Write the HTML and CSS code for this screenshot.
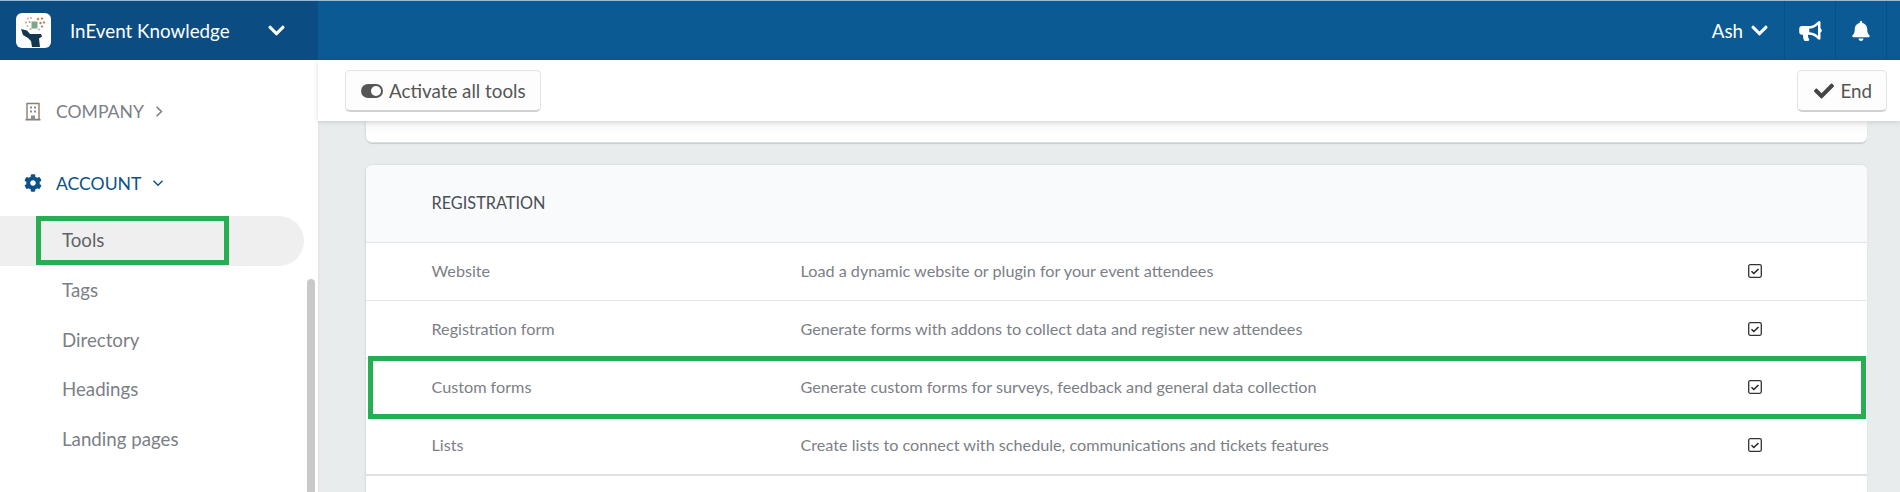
FILE: index.html
```html
<!DOCTYPE html>
<html lang="en">
<head>
<meta charset="utf-8">
<title>InEvent Knowledge - Tools</title>
<link rel="stylesheet" href="styles.css">
</head>
<body>
<header class="topbar">
  <div class="brand">
    <svg class="logo" viewBox="0 0 35 35">
      <rect width="35" height="35" rx="6" fill="#fff"/>
      <g>
        <circle cx="12" cy="5.500" r="1.100" fill="#d9a9a0"/><circle cx="15" cy="5" r="1" fill="#a9b98a"/>
        <circle cx="22" cy="6" r="1.300" fill="#d98a3a"/><circle cx="26" cy="5.500" r="1.100" fill="#c9604b"/>
        <circle cx="10" cy="9.500" r="1.100" fill="#d9a36a"/><circle cx="13.500" cy="9" r="1" fill="#8aa7ae"/>
        <circle cx="24.500" cy="10" r="1.200" fill="#6d98a3"/><circle cx="28" cy="9.500" r="1.200" fill="#d98a3a"/>
        <circle cx="11.500" cy="13" r="1" fill="#a9b98a"/><circle cx="26" cy="13.500" r="1.100" fill="#c9604b"/>
        <circle cx="14.500" cy="16" r="1" fill="#d9a36a"/><circle cx="23" cy="16.500" r="1" fill="#a9b98a"/>
        <rect x="15.500" y="8.500" width="6" height="7" fill="#7fa58c"/>
      </g>
      <path d="M5 16l6 1.500 3 3.500h11l1 2.500-3 2 1 8.500h-8l-1-6-3-3-5-3z" fill="#14384f"/>
    </svg>
    <span class="brand-name">InEvent Knowledge</span>
    <svg class="chev-brand" viewBox="0 0 448 512"><path d="M207.029 381.476L12.686 187.132c-9.373-9.373-9.373-24.569 0-33.941l22.667-22.667c9.357-9.357 24.522-9.375 33.901-.04L224 284.505l154.745-154.021c9.379-9.335 24.544-9.317 33.901.04l22.667 22.667c9.373 9.373 9.373 24.569 0 33.941L240.971 381.476c-9.373 9.372-24.569 9.372-33.942 0z"/></svg>
  </div>
  <div class="top-right">
    <div class="user">Ash
      <svg class="chev-user" viewBox="0 0 448 512"><path d="M207.029 381.476L12.686 187.132c-9.373-9.373-9.373-24.569 0-33.941l22.667-22.667c9.357-9.357 24.522-9.375 33.901-.04L224 284.505l154.745-154.021c9.379-9.335 24.544-9.317 33.901.04l22.667 22.667c9.373 9.373 9.373 24.569 0 33.941L240.971 381.476c-9.373 9.372-24.569 9.372-33.942 0z"/></svg>
    </div>
    <div class="top-icon">
      <svg class="horn" viewBox="0 0 576 512"><path d="M576 240c0-23.63-12.95-44.04-32-55.12V32.01C544 23.26 537.02 0 512 0c-7.12 0-14.19 2.38-19.98 7.02l-85.03 68.03C364.28 109.19 310.66 128 256 128H64c-35.35 0-64 28.65-64 64v96c0 35.35 28.65 64 64 64h33.7c-1.39 10.48-2.18 21.14-2.18 32 0 39.77 9.26 77.35 25.56 110.94 5.19 10.69 16.52 17.06 28.4 17.06h74.28c26.05 0 41.69-29.84 25.9-50.56-16.4-21.52-26.15-48.36-26.15-77.44 0-11.11 1.62-21.79 4.41-32H256c54.66 0 108.28 18.81 150.98 52.95l85.03 68.03a32.023 32.023 0 0 0 19.98 7.02c24.92 0 32-22.78 32-32V295.13C563.05 284.04 576 263.63 576 240zm-96 141.42l-33.05-26.44C392.95 311.78 325.12 288 256 288v-96c69.12 0 136.95-23.78 190.95-66.98L480 98.58v282.84z"/></svg>
    </div>
    <div class="top-icon">
      <svg class="bell" viewBox="0 0 448 512"><path d="M224 512c35.32 0 63.97-28.65 63.97-64H160.03c0 35.35 28.65 64 63.97 64zm215.39-149.71c-19.32-20.76-55.47-51.99-55.47-154.29 0-77.7-54.48-139.9-127.94-155.16V32c0-17.67-14.32-32-31.98-32s-31.98 14.33-31.98 32v20.84C118.56 68.1 64.08 130.3 64.08 208c0 102.3-36.15 133.53-55.47 154.29-6 6.45-8.66 14.16-8.61 21.71.11 16.4 12.98 32 32.1 32h383.8c19.12 0 32-15.6 32.1-32 .05-7.55-2.61-15.27-8.61-21.71z"/></svg>
    </div>
  </div>
</header>

<div class="layout">
  <aside class="sidebar">
    <div class="section section-company">
      <svg class="ico-building" viewBox="0 0 16 18"><path d="M2 1h12v16H2zM0.500 17.300h15" fill="none" stroke="#8a7f74" stroke-width="1.400"/><path d="M5 4h2v2H5zM9 4h2v2H9zM5 8h2v2H5zM9 8h2v2H9zM6 13h4v4H6z" fill="#8a8f94"/></svg>
      <span>COMPANY</span>
      <svg class="chev-right" viewBox="0 0 10 16"><path d="M2 2l6 6-6 6" fill="none" stroke="#7b8086" stroke-width="2"/></svg>
    </div>
    <div class="section section-account">
      <svg class="ico-cog" viewBox="0 0 512 512"><path d="M487.4 315.7l-42.6-24.6c4.3-23.2 4.3-47 0-70.2l42.6-24.6c4.9-2.8 7.1-8.6 5.5-14-11.1-35.6-30-67.8-54.7-94.6-3.8-4.1-10-5.1-14.8-2.3L380.8 110c-17.9-15.4-38.5-27.3-60.8-35.1V25.8c0-5.6-3.9-10.5-9.4-11.7-36.7-8.2-74.3-7.8-109.2 0-5.5 1.2-9.4 6.1-9.4 11.7V75c-22.2 7.9-42.8 19.8-60.8 35.1L88.7 85.5c-4.9-2.8-11-1.9-14.8 2.3-24.7 26.7-43.6 58.9-54.7 94.6-1.7 5.4.6 11.2 5.5 14L67.3 221c-4.3 23.2-4.3 47 0 70.2l-42.6 24.6c-4.9 2.8-7.1 8.6-5.5 14 11.1 35.6 30 67.8 54.7 94.6 3.8 4.1 10 5.1 14.8 2.3l42.6-24.6c17.9 15.4 38.5 27.3 60.8 35.1v49.2c0 5.6 3.9 10.5 9.4 11.7 36.7 8.2 74.3 7.8 109.2 0 5.5-1.2 9.4-6.1 9.4-11.7v-49.2c22.2-7.9 42.8-19.8 60.8-35.1l42.6 24.6c4.9 2.8 11 1.9 14.8-2.3 24.7-26.7 43.6-58.9 54.7-94.6 1.5-5.5-.7-11.3-5.6-14.1zM256 336c-44.1 0-80-35.9-80-80s35.9-80 80-80 80 35.9 80 80-35.9 80-80 80z"/></svg>
      <span>ACCOUNT</span>
      <svg class="chev-small" viewBox="0 0 16 10"><path d="M2 2l6 6 6-6" fill="none" stroke="#0c5288" stroke-width="2"/></svg>
    </div>
    <nav class="menu">
      <a class="menu-item active">Tools<span class="mark mark-tools"></span></a>
      <a class="menu-item">Tags</a>
      <a class="menu-item">Directory</a>
      <a class="menu-item">Headings</a>
      <a class="menu-item">Landing pages</a>
    </nav>
    <div class="scrollbar"></div>
  </aside>

  <main class="main">
    <div class="toolbar">
      <button class="btn">
        <svg class="ico-toggle" viewBox="0 0 22 14"><rect width="22" height="14" rx="7" fill="#555"/><circle cx="15" cy="7" r="5" fill="#fff"/></svg>
        Activate all tools
      </button>
      <button class="btn btn-end">
        <svg class="ico-check" viewBox="0 0 512 512"><path d="M173.898 439.404l-166.4-166.4c-9.997-9.997-9.997-26.206 0-36.204l36.203-36.204c9.997-9.998 26.207-9.998 36.204 0L192 312.69 432.095 72.596c9.997-9.997 26.207-9.997 36.204 0l36.203 36.204c9.997 9.997 9.997 26.206 0 36.204l-294.4 294.401c-9.998 9.997-26.207 9.997-36.204-.001z"/></svg>
        End
      </button>
    </div>
    <div class="content">
      <section class="card card-cut"></section>
      <section class="card">
        <h2 class="card-head">REGISTRATION</h2>
        <div class="row">
          <span>Website</span><span>Load a dynamic website or plugin for your event attendees</span>
          <svg class="box" viewBox="0 0 14 14"><rect x=".7" y=".7" width="12.600" height="12.600" rx="1.500" fill="none" stroke="#333" stroke-width="1.300"/><path d="M3.500 7.300l2.300 2.200 4.700-4.500" fill="none" stroke="#222" stroke-width="1.500"/></svg>
        </div>
        <div class="row">
          <span>Registration form</span><span>Generate forms with addons to collect data and register new attendees</span>
          <svg class="box" viewBox="0 0 14 14"><rect x=".7" y=".7" width="12.600" height="12.600" rx="1.500" fill="none" stroke="#333" stroke-width="1.300"/><path d="M3.500 7.300l2.300 2.200 4.700-4.500" fill="none" stroke="#222" stroke-width="1.500"/></svg>
        </div>
        <div class="row row-marked">
          <span>Custom forms</span><span>Generate custom forms for surveys, feedback and general data collection</span>
          <svg class="box" viewBox="0 0 14 14"><rect x=".7" y=".7" width="12.600" height="12.600" rx="1.500" fill="none" stroke="#333" stroke-width="1.300"/><path d="M3.500 7.300l2.300 2.200 4.700-4.500" fill="none" stroke="#222" stroke-width="1.500"/></svg>
          <span class="mark mark-row"></span>
        </div>
        <div class="row row-last">
          <span>Lists</span><span>Create lists to connect with schedule, communications and tickets features</span>
          <svg class="box" viewBox="0 0 14 14"><rect x=".7" y=".7" width="12.600" height="12.600" rx="1.500" fill="none" stroke="#333" stroke-width="1.300"/><path d="M3.500 7.300l2.300 2.200 4.700-4.500" fill="none" stroke="#222" stroke-width="1.500"/></svg>
        </div>
        <div class="row-rest"></div>
      </section>
    </div>
  </main>
</div>
</body>
</html>
```
FILE: styles.css
```css
* { box-sizing: border-box; }
html, body { margin: 0; height: 492px; overflow: hidden; }
body { font-family: Lato, "Liberation Sans", sans-serif; color: #7b8086; background: #fff; }

.topbar { height: 60px; display: flex; justify-content: space-between; background: #0c5a94; border-top: 1px solid #9db9cf; color: #fff; }
.brand { width: 318px; background: #0b4d83; display: flex; align-items: center; padding-left: 16px; }
.logo { width: 35px; height: 35px; }
.brand-name { margin-left: 19px; font-size: 18.800px; }
.chev-brand { width: 17px; height: 19px; margin-left: 38px; fill: #fff; }
.top-right { display: flex; align-items: stretch; padding-right: 13px; }
.user { display: flex; align-items: center; padding-right: 16px; font-size: 18.800px; border-right: 1px solid #0b4f85; }
.chev-user { width: 17px; height: 19px; margin-left: 8px; fill: #fff; }
.top-icon { width: 51px; display: flex; align-items: center; justify-content: center; border-right: 1px solid #0b4f85; fill: #fff; }
.horn { width: 23px; height: 20px; }
.bell { width: 18px; height: 20px; }

.layout { display: flex; height: 432px; }
.sidebar { width: 318px; flex: none; position: relative; background: #fff; }
.section { display: flex; align-items: center; font-size: 17.600px; height: 24px; }
.section span { margin-left: 15px; }
.section-company { margin-top: 39px; padding-left: 25px; color: #7b8086; }
.section-account { margin-top: 48px; padding-left: 24px; color: #0c5288; }
.section-account span { margin-left: 14px; }
.ico-building { width: 16px; height: 19px; }
.ico-cog { width: 18px; height: 18px; fill: #0c5288; }
.chev-right { width: 8px; height: 13px; margin-left: 11px; }
.chev-small { width: 12px; height: 8px; margin-left: 11px; }

.menu { display: flex; flex-direction: column; margin-top: 21px; width: 304px; }
.menu-item { position: relative; height: 49.700px; display: flex; align-items: center; padding: 0 0 2px 62px; font-size: 18.700px; }
.menu-item.active { height: 50px; background: #efefef; border-radius: 0 25px 25px 0; color: #5f6368; }
.mark { position: absolute; border: 5px solid #27ae52; pointer-events: none; }
.mark-tools { left: 36px; top: 0; width: 193px; height: 49px; }
.scrollbar { position: absolute; right: 3px; top: 219px; bottom: 0; width: 8px; background: #c9c9c9; border-radius: 4px 4px 0 0; }

.main { flex: 1; min-width: 0; display: flex; flex-direction: column; background: #e9eced; box-shadow: inset 2px 0 2px -1px #e0e3e5; }
.toolbar { height: 61px; flex: none; display: flex; justify-content: space-between; align-items: flex-start; padding: 10px 13px 0 27px; background: #fff; box-shadow: 0 1px 5px rgba(0,0,0,.14); position: relative; z-index: 1; }
.btn { height: 42px; display: flex; align-items: center; gap: 6px; padding: 0 14px 0 15px; font: 18.800px Lato, "Liberation Sans", sans-serif; color: #555; background: #fdfdfd; border: 1px solid #e3e3e3; border-bottom: 2px solid #d0d0d0; border-radius: 5px; }
.ico-toggle { width: 22px; height: 14px; }
.ico-check { width: 20px; height: 20px; fill: #444; }
.btn-end { gap: 6px; padding-left: 16px; padding-right: 14px; }

.content { flex: 1; min-height: 0; overflow: hidden; padding: 0 33px 0 48px; display: flex; flex-direction: column; gap: 22px; }
.card { background: #fff; border-radius: 6px; box-shadow: -2px 0 0 -.5px #dcdfe1, 0 -1px 0 #dfe2e4, 0 1px 1px #c8cbcd; flex: none; }
.card-cut { height: 22px; border-radius: 0 0 6px 6px; background: linear-gradient(#f4f4f4, #fff 60%); border-bottom: 1px solid #dcdfe1; }
.card-head { margin: 0; height: 78px; padding: 0 0 2px 65.500px; display: flex; align-items: center; font-size: 16.300px; font-weight: 400; color: #4a4f55; background: #f9fafb; border-radius: 6px 6px 0 0; border-bottom: 1px solid #dfe2e4; }
.row { position: relative; height: 58px; display: grid; grid-template-columns: 369px 947px 14px; align-items: center; padding-left: 65.500px; font-size: 16.200px; border-bottom: 1px solid #e3e5e7; }
.row > span:not(.mark) { padding-bottom: 2px; }
.row-marked { border-bottom-color: transparent; }
.row-last { height: 59px; border-bottom: 2px solid #dfe1e3; }
.row-rest { height: 40px; }
.box { width: 14px; height: 14px; margin-bottom: 2px; }
.mark-row { left: 2px; right: 1px; top: -3px; height: 63px; }
```
